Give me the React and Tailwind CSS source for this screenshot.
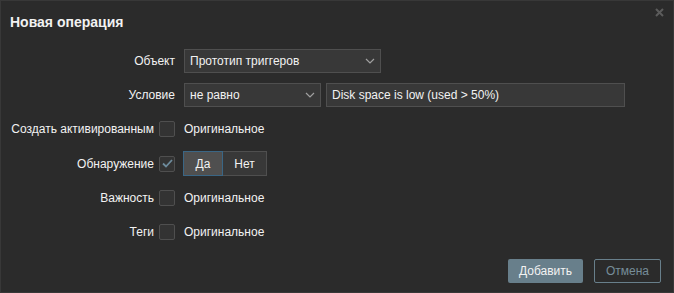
import React, { useState } from "react";

const Chevron = () => (
  <svg width="10" height="6" viewBox="0 0 10 6" className="shrink-0">
    <path d="M1 1l4 4 4-4" fill="none" stroke="#a0a0a0" strokeWidth="1.2" />
  </svg>
);

const Check = ({ checked }) => (
  <span className="w-4 h-4 flex items-center justify-center border border-[#4f4f4f] bg-[#333333] rounded-[2px]">
    {checked && (
      <svg width="11" height="9" viewBox="0 0 11 9">
        <path d="M1 4.5l3 3L10 1" fill="none" stroke="#6d8b9c" strokeWidth="1.8" />
      </svg>
    )}
  </span>
);

const Label = ({ children, box, checked }) => (
  <div className="flex items-center justify-end gap-[5px] text-[#f2f2f2]">
    <span>{children}</span>
    {box && <Check checked={checked} />}
  </div>
);

export default function App() {
  const [discover, setDiscover] = useState("yes");

  return (
    <div
      className="w-[674px] h-[293px] bg-[#2b2b2b] border border-[#383838] relative text-[12px] text-[#f2f2f2] flex flex-col"
      style={{ fontFamily: '"Liberation Sans", Arial, sans-serif' }}
    >
      {/* close */}
      <button className="absolute right-[9px] top-[7px]">
        <svg width="9" height="9" viewBox="0 0 9 9">
          <path d="M1 1l7 7M8 1L1 8" stroke="#5c5c5c" strokeWidth="2" />
        </svg>
      </button>

      {/* header */}
      <div className="pl-[9px] pt-[13px] h-[48px]">
        <h4 className="text-[14px] font-bold leading-[17px]">Новая операция</h4>
      </div>

      {/* form */}
      <div className="grid grid-cols-[174px_1fr] gap-x-[9px] gap-y-[10px] items-center pr-[48px]">
        <Label>Объект</Label>
        <div className="flex">
          <div className="w-[197px] h-[24px] bg-[#383838] border border-[#4f4f4f] flex items-center justify-between px-[5px]">
            <span>Прототип триггеров</span>
            <Chevron />
          </div>
        </div>

        <Label>Условие</Label>
        <div className="flex gap-[5px]">
          <div className="w-[137px] h-[24px] bg-[#383838] border border-[#4f4f4f] flex items-center justify-between px-[5px]">
            <span>не равно</span>
            <Chevron />
          </div>
          <div className="flex-1 h-[24px] bg-[#383838] border border-[#4f4f4f] flex items-center px-[5px]">
            Disk space is low (used &gt; 50%)
          </div>
        </div>

        <Label box>Создать активированным</Label>
        <div className="h-[24px] flex items-center">Оригинальное</div>

        <Label box checked>Обнаружение</Label>
        <div className="flex -ml-px">
          <button
            onClick={() => setDiscover("yes")}
            className={`h-[25px] w-[40px] border ${
              discover === "yes"
                ? "bg-[#4f4f4f] border-[#3a6685]"
                : "bg-[#383838] border-[#4f4f4f]"
            }`}
          >
            Да
          </button>
          <button
            onClick={() => setDiscover("no")}
            className={`h-[25px] w-[44px] border border-l-0 ${
              discover === "no"
                ? "bg-[#4f4f4f] border-[#3a6685]"
                : "bg-[#383838] border-[#4f4f4f]"
            }`}
          >
            Нет
          </button>
        </div>

        <Label box>Важность</Label>
        <div className="h-[24px] flex items-center">Оригинальное</div>

        <Label box>Теги</Label>
        <div className="h-[24px] flex items-center">Оригинальное</div>
      </div>

      {/* footer */}
      <div className="mt-auto flex justify-end gap-[11px] pr-[12px] pb-[9px]">
        <button className="h-[24px] w-[75px] bg-[#687f8b] rounded-[2px] text-[#f2f2f2]">
          Добавить
        </button>
        <button className="h-[24px] w-[67px] border border-[#687f8b] rounded-[2px] text-[#768d99]">
          Отмена
        </button>
      </div>
    </div>
  );
}
